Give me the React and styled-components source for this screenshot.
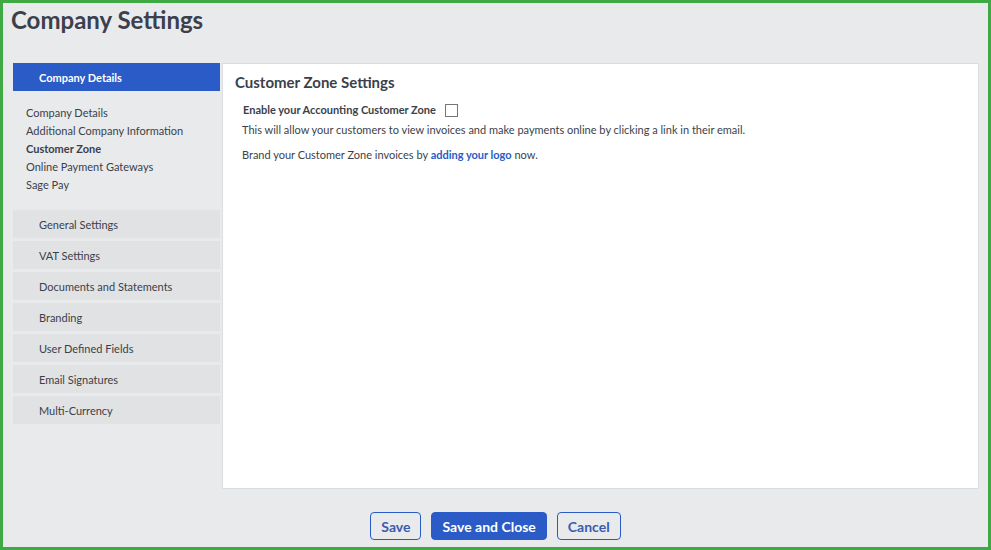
import styled, { createGlobalStyle } from "styled-components";

const Global = createGlobalStyle`
  html, body { margin: 0; padding: 0; }
  body { font-family: Lato, "Open Sans", sans-serif; }
  * { box-sizing: border-box; }
`;

const Page = styled.div`
  width: 991px;
  height: 550px;
  border: 3px solid #3fa944;
  background: #e9eaec;
  display: flex;
  flex-direction: column;
  color: #3b3f4a;
`;

const Title = styled.h1`
  margin: 0;
  padding: 2px 0 0 8px;
  font-size: 24px;
  line-height: 30px;
  font-weight: 700;
  color: #3b404c;
  height: 60px;
`;

const Body = styled.div`
  display: flex;
  gap: 2px;
  padding: 0 9px 0 10px;
  height: 426px;
`;

const Sidebar = styled.div`
  width: 207px;
  flex-shrink: 0;
  display: flex;
  flex-direction: column;
`;

const SectionBtn = styled.div`
  height: 28px;
  display: flex;
  align-items: center;
  padding-left: 26px;
  font-size: 11px;
  margin-bottom: 3px;
  background: ${(p) => (p.$active ? "#2a5bc7" : "#e1e2e4")};
  color: ${(p) => (p.$active ? "#fff" : "#3b3f4a")};
  font-weight: ${(p) => (p.$active ? 700 : 400)};
`;

const SubList = styled.div`
  display: flex;
  flex-direction: column;
  padding: 10px 0 16px 13px;
`;

const SubItem = styled.div`
  font-size: 11px;
  line-height: 18px;
  color: #3b3f4a;
  font-weight: ${(p) => (p.$current ? 700 : 400)};
`;

const Panel = styled.div`
  flex: 1;
  background: #fff;
  border: 1px solid #dcdde0;
  padding: 8px 12px;
`;

const PanelTitle = styled.h2`
  margin: 0 0 9px;
  font-size: 15px;
  line-height: 20px;
  font-weight: 700;
  color: #3b3f4a;
`;

const EnableRow = styled.label`
  display: flex;
  align-items: center;
  gap: 9px;
  padding-left: 8px;
  font-size: 11px;
  font-weight: 700;
  line-height: 18px;
`;

const Check = styled.span`
  width: 13px;
  height: 13px;
  border: 1px solid #767676;
  background: #fff;
  display: inline-block;
`;

const Para = styled.p`
  margin: ${(p) => p.$mt || 0}px 0 0;
  padding-left: 7px;
  font-size: 11px;
  line-height: 18px;
  color: #3b3f4a;
`;

const Link = styled.a`
  color: #2a5bc7;
  font-weight: 700;
  text-decoration: none;
`;

const Footer = styled.div`
  display: flex;
  justify-content: center;
  gap: 10px;
  padding-top: 23px;
`;

const Button = styled.button`
  height: 28px;
  padding: 0 ${(p) => (p.$primary ? 10 : 10)}px;
  border-radius: 4px;
  border: 1px solid #2a5bc7;
  background: ${(p) => (p.$primary ? "#2a5bc7" : "transparent")};
  color: ${(p) => (p.$primary ? "#fff" : "#3a5bb0")};
  font-family: Lato, sans-serif;
  font-size: 14px;
  font-weight: 700;
`;

const sections = [
  "General Settings",
  "VAT Settings",
  "Documents and Statements",
  "Branding",
  "User Defined Fields",
  "Email Signatures",
  "Multi-Currency",
];

const subs = [
  "Company Details",
  "Additional Company Information",
  "Customer Zone",
  "Online Payment Gateways",
  "Sage Pay",
];

export default function App() {
  return (
    <>
      <Global />
      <Page>
        <Title>Company Settings</Title>
        <Body>
          <Sidebar>
            <SectionBtn $active>Company Details</SectionBtn>
            <SubList>
              {subs.map((s) => (
                <SubItem key={s} $current={s === "Customer Zone"}>
                  {s}
                </SubItem>
              ))}
            </SubList>
            {sections.map((s) => (
              <SectionBtn key={s}>{s}</SectionBtn>
            ))}
          </Sidebar>
          <Panel>
            <PanelTitle>Customer Zone Settings</PanelTitle>
            <EnableRow>
              Enable your Accounting Customer Zone
              <Check />
            </EnableRow>
            <Para $mt={2}>
              This will allow your customers to view invoices and make payments online by clicking a link in their email.
            </Para>
            <Para $mt={7}>
              Brand your Customer Zone invoices by <Link href="#">adding your logo</Link> now.
            </Para>
          </Panel>
        </Body>
        <Footer>
          <Button>Save</Button>
          <Button $primary>Save and Close</Button>
          <Button>Cancel</Button>
        </Footer>
      </Page>
    </>
  );
}
